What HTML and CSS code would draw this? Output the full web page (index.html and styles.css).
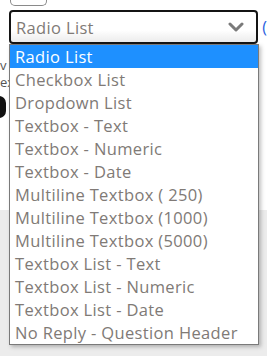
FILE: index.html
```html
<!DOCTYPE html>
<html>
<head>
<meta charset="utf-8">
<link rel="stylesheet" href="styles.css">
</head>
<body>
<div class="page">
  <div class="top-btn"></div>
  <div class="field-row">
    <div class="select">
      <span class="select-value">Radio List</span>
      <svg class="chevron" width="16" height="10" viewBox="0 0 16 10"><path d="M2 2 L8 8 L14 2" fill="none" stroke="#7a7a7a" stroke-width="3" stroke-linecap="round" stroke-linejoin="round"/></svg>
    </div>
    <span class="link">(</span>
  </div>
  <div class="behind">
    <div class="behind-v">v</div>
    <div class="behind-ex">ex</div>
    <div class="behind-blob"></div>
  </div>
  <div class="lower"></div>

  <ul class="options">
    <li class="opt selected">Radio List</li>
    <li class="opt">Checkbox List</li>
    <li class="opt">Dropdown List</li>
    <li class="opt">Textbox - Text</li>
    <li class="opt">Textbox - Numeric</li>
    <li class="opt">Textbox - Date</li>
    <li class="opt">Multiline Textbox ( 250)</li>
    <li class="opt">Multiline Textbox (1000)</li>
    <li class="opt">Multiline Textbox (5000)</li>
    <li class="opt">Textbox List - Text</li>
    <li class="opt">Textbox List - Numeric</li>
    <li class="opt">Textbox List - Date</li>
    <li class="opt">No Reply - Question Header</li>
  </ul>
</div>
</body>
</html>
```

FILE: styles.css
```css
html, body {
  margin: 0;
  padding: 0;
  background: #ffffff;
}
.page {
  position: relative;
  width: 267px;
  height: 356px;
  overflow: hidden;
  font-family: "Open Sans", "Noto Sans", sans-serif;
}
.top-btn {
  margin-left: 10px;
  width: 35px;
  height: 5px;
  border: 1px solid #8a8a8a;
  border-top: none;
  border-radius: 0 0 5px 5px;
}
.field-row {
  display: flex;
  align-items: center;
  margin-top: 4px;
  margin-left: 9px;
  gap: 4px;
}
.select {
  box-sizing: border-box;
  width: 250px;
  height: 34px;
  border: 2px solid #141414;
  border-radius: 4px;
  background: linear-gradient(#ffffff 0%, #ffffff 60%, #ececec 100%);
  display: flex;
  align-items: center;
  justify-content: space-between;
  padding: 0 12px 0 5px;
}
.select-value {
  font-size: 16.5px;
  letter-spacing: 0.35px;
  color: #807a76;
}
.chevron {
  display: block;
}
.link {
  font-size: 16px;
  color: #2b5fe0;
}
.behind {
  position: relative;
  height: 166px;
  font-size: 13px;
  color: #555;
}
.behind-v {
  position: absolute;
  left: 0;
  top: 14px;
  line-height: 14px;
}
.behind-ex {
  position: absolute;
  left: 0;
  top: 31px;
  line-height: 14px;
}
.behind-blob {
  position: absolute;
  left: -8px;
  top: 52px;
  width: 14px;
  height: 22px;
  border-radius: 7px;
  background: #111;
}
.lower {
  height: 150px;
  background: #ececec;
}
.options {
  position: absolute;
  left: 9px;
  top: 44px;
  box-sizing: border-box;
  width: 250px;
  margin: 0;
  padding: 0;
  list-style: none;
  background: #fff;
  border: 1px solid #7a7a7a;
  box-shadow: 2px 2px 4px rgba(0, 0, 0, 0.25);
}
.opt {
  height: 23px;
  line-height: 23px;
  padding-left: 5px;
  font-size: 16.5px;
  letter-spacing: 0.35px;
  color: #807a76;
  white-space: nowrap;
}
.opt.selected {
  background: #1e90ff;
  color: #ffffff;
}
```
